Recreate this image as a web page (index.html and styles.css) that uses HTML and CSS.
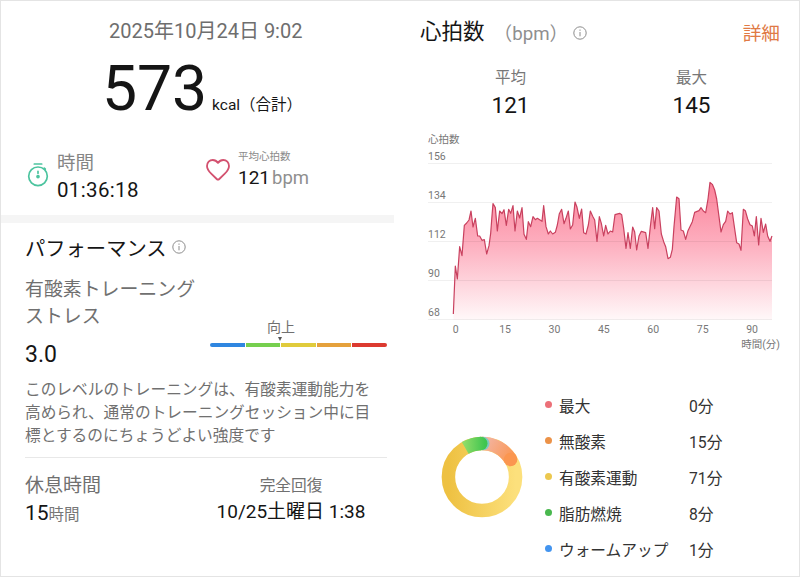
FILE: index.html
```html
<!DOCTYPE html>
<html lang="ja">
<head>
    <meta charset="UTF-8">
    <meta name="viewport" content="width=device-width, initial-scale=1.0">
    <title>ワークアウト</title>
    <link rel="stylesheet" href="styles.css">
</head>
<body>
    <div class="page">
        <div class="left">
            <div class="summary">
                <div class="date">2025年10月24日 9:02</div>
                <div class="calories"><span class="kcal">573</span><span class="unit">kcal（合計）</span></div>
                <div class="stats">
                    <div class="stat time">
                        <svg class="timer" width="22" height="26" viewBox="0 0 22 26" fill="none" stroke="#4cc49f" stroke-width="1.7" stroke-linecap="round">
                            <path d="M7.300 2h7.400"/>
                            <circle cx="11" cy="14.300" r="9.300"/>
                            <path d="M17.300 6.200l1 1M11 9.300v2"/>
                            <circle cx="11" cy="14.600" r="1" fill="#4cc49f"/>
                        </svg>
                        <div>
                            <div class="stat-name">時間</div>
                            <div class="stat-value">01:36:18</div>
                        </div>
                    </div>
                    <div class="stat pulse">
                        <svg class="heart" width="24" height="22" viewBox="0 0 24 22" fill="none" stroke="#d3516f" stroke-width="1.8" stroke-linejoin="round">
                            <path d="M12 3.900C10.400 1.700 8.600 1 6.800 1 3.500 1 1 3.600 1 7c0 3.100 1.700 5.200 4.200 7.700l5.500 5.300c.8.8 1.800.8 2.600 0l5.500-5.300C21.300 12.200 23 10.100 23 7c0-3.400-2.500-6-5.800-6-1.800 0-3.600.7-5.200 2.900z"/>
                        </svg>
                        <div>
                            <div class="pulse-name">平均心拍数</div>
                            <div class="pulse-value">121<span>bpm</span></div>
                        </div>
                    </div>
                </div>
            </div>
            <div class="performance">
                <h2>パフォーマンス
                    <svg class="info" width="14" height="14" viewBox="0 0 14 14" fill="none" stroke="#8c8c8c">
                        <circle cx="7" cy="7" r="6.200"/>
                        <path d="M7 6v4.300M7 3.500v1.300"/>
                    </svg>
                </h2>
                <div class="stress">
                    <div>
                        <div class="stress-name">有酸素トレーニング<br>ストレス</div>
                        <div class="stress-value">3.0</div>
                    </div>
                    <div class="level">
                        <div class="level-name">向上</div>
                        <div class="arrow"></div>
                        <div class="scale">
                            <i class="blue"></i><i class="green"></i><i class="yellow"></i><i class="orange"></i><i class="red"></i>
                        </div>
                    </div>
                </div>
                <p class="advice">このレベルのトレーニングは、有酸素運動能力を高められ、通常のトレーニングセッション中に目標とするのにちょうどよい強度です</p>
                <div class="rest">
                    <div>
                        <div class="rest-name">休息時間</div>
                        <div class="rest-value">15<span>時間</span></div>
                    </div>
                    <div class="recovery">
                        <div class="recovery-name">完全回復</div>
                        <div class="recovery-value">10/25土曜日 1:38</div>
                    </div>
                </div>
            </div>
        </div>

        <div class="right">
            <div class="heading">
                <h2>心拍数</h2>
                <span class="bpm">（bpm）</span>
                <svg class="info" width="14" height="14" viewBox="0 0 14 14" fill="none" stroke="#8c8c8c">
                    <circle cx="7" cy="7" r="6.200"/>
                    <path d="M7 6v4.300M7 3.500v1.300"/>
                </svg>
                <span class="detail">詳細</span>
            </div>
            <div class="numbers">
                <div><div class="number-name">平均</div><div class="number">121</div></div>
                <div><div class="number-name">最大</div><div class="number">145</div></div>
            </div>
            <div class="chart">
                <div class="axis-name">心拍数</div>
                <div class="plot">
                    <svg width="345" height="158" viewBox="0 0 1035 474">
                        <defs>
                            <linearGradient id="fade" gradientUnits="userSpaceOnUse" x1="0" y1="58" x2="0" y2="470">
                                <stop offset="0" stop-color="#fb8199"/>
                                <stop offset="0.45" stop-color="#fdafbf"/>
                                <stop offset="1" stop-color="#fff8f9"/>
                            </linearGradient>
                        </defs>
                        <path id="area" fill="url(#fade)"/>
                        <path d="M0 1.500h1032M0 118.500h1032M0 235.500h1032M0 352.500h1032M0 469.500h1032" stroke="#000" stroke-opacity=".06" stroke-width="3"/>
                        <path id="line" fill="none" stroke="#c9415f" stroke-width="3.600" stroke-linejoin="round"/>
                    </svg>
                    <div class="y-axis"><span>156</span><span>134</span><span>112</span><span>90</span><span>68</span></div>
                </div>
                <div class="x-axis"><span>0</span><span>15</span><span>30</span><span>45</span><span>60</span><span>75</span><span>90</span></div>
                <div class="x-name">時間(分)</div>
            </div>
            <div class="zones">
                <svg class="ring" width="82" height="82" viewBox="-41 -41 82 82" fill="none" stroke-width="13.500">
                    <defs>
                        <linearGradient id="gold" x1="0" y1="0" x2="1" y2="0">
                            <stop offset="0" stop-color="#eec142"/>
                            <stop offset="1" stop-color="#fce07c"/>
                        </linearGradient>
                        <linearGradient id="peach" gradientUnits="userSpaceOnUse" x1="3" y1="-34" x2="30" y2="-17">
                            <stop offset="0" stop-color="#f3b39f"/>
                            <stop offset="1" stop-color="#fb9650"/>
                        </linearGradient>
                        <linearGradient id="leaf" gradientUnits="userSpaceOnUse" x1="-18" y1="0" x2="3" y2="0">
                            <stop offset="0" stop-color="#8fdc68"/>
                            <stop offset="1" stop-color="#3fc550"/>
                        </linearGradient>
                    </defs>
                    <circle r="33.600" stroke="url(#gold)"/>
                    <path d="M0 -33.600A33.600 33.600 0 0 1 28.600 -17.600" stroke="url(#peach)"/>
                    <circle cx="28.600" cy="-17.600" r="6.750" fill="#fb9650" stroke="none"/>
                    <circle cx="0.800" cy="-33.600" r="6.750" fill="#7dc9c4" stroke="none"/>
                    <path d="M-16.800 -29.100A33.600 33.600 0 0 1 -1 -33.600" stroke="url(#leaf)"/>
                    <circle cx="-1.200" cy="-33.600" r="6.750" fill="url(#leaf)" stroke="none"/>
                </svg>
                <ul class="legend">
                    <li><i class="dot max"></i><span>最大</span><b>0分</b></li>
                    <li><i class="dot anaerobic"></i><span>無酸素</span><b>15分</b></li>
                    <li><i class="dot aerobic"></i><span>有酸素運動</span><b>71分</b></li>
                    <li><i class="dot fat"></i><span>脂肪燃焼</span><b>8分</b></li>
                    <li><i class="dot warmup"></i><span>ウォームアップ</span><b>1分</b></li>
                </ul>
            </div>
        </div>
    </div>
    <script src="chart.js"></script>
</body>
</html>
```
FILE: styles.css
```css
* { box-sizing: border-box; }
body { margin: 0; background: #fff; color: #151515; font-family: Roboto, "Noto Sans CJK JP", sans-serif; }
h2, p, ul { margin: 0; padding: 0; font-weight: normal; }
svg { display: block; flex: none; }
.page { display: flex; width: 800px; height: 577px; border: 1px solid #e4e4e4; overflow: hidden; white-space: nowrap; }

/* left side */
.left { width: 393px; flex: none; }
.summary { height: 222px; padding-top: 15px; border-bottom: 8px solid #f5f5f5; }
.date { padding-left: 108px; font-size: 20px; line-height: 30px; color: #6e6e6e; }
.calories { display: flex; align-items: baseline; height: 76px; padding-left: 101px; line-height: 85px; }
.kcal { font-size: 62.5px; letter-spacing: -0.1px; }
.unit { margin-left: 5px; font-size: 15.5px; }
.stats { display: flex; padding-top: 27px; }
.stat { display: flex; }
.time { width: 205px; padding-left: 26px; }
.timer { margin: 13px 8px 0 0; }
.stat-name { font-size: 18.5px; line-height: 28px; color: #858585; }
.stat-value { font-size: 20.5px; line-height: 26px; letter-spacing: 0.35px; }
.heart { margin: 10px 8px 0 0; }
.pulse-name { font-size: 10.5px; line-height: 16px; color: #8a8a8a; }
.pulse-value { font-size: 19px; line-height: 25px; }
.pulse-value span { margin-left: 2px; font-size: 18.5px; color: #8f8f8f; }

.performance { padding: 11px 7px 0 24px; }
.performance h2 { display: flex; font-size: 20.3px; line-height: 31px; }
.performance .info { margin: 6px 0 0 5px; }
.stress { display: flex; justify-content: space-between; padding-top: 11px; }
.stress-name { font-size: 18.9px; line-height: 27px; color: #707070; }
.stress-value { margin-top: 9px; font-size: 23px; line-height: 32px; }
.level { width: 177px; padding-top: 42px; }
.level-name { padding-left: 57px; font-size: 14px; line-height: 19px; color: #707070; }
.arrow { width: 0; margin-left: 68px; border: 2px solid transparent; border-top: 4px solid #555; border-bottom: 0; }
.scale { display: flex; gap: 1px; height: 4px; margin-top: 2px; border-radius: 2px; overflow: hidden; }
.scale i { flex: 1; }
.blue { background: #2f86e0; }
.green { background: #76cf4e; }
.yellow { background: #e0cb3c; }
.orange { background: #e5a13c; }
.red { background: #dc3a30; }
.advice { width: 350px; margin-top: 7px; font-size: 15.7px; line-height: 23px; color: #707070; white-space: normal; }
.rest { display: flex; margin-top: 10px; padding-top: 13px; border-top: 1px solid #e8e8e8; }
.rest-name { font-size: 19px; line-height: 30px; color: #707070; }
.rest-value { font-size: 21px; line-height: 25px; }
.rest-value span { font-size: 15.5px; color: #777; }
.recovery { width: 150px; margin-left: 115px; text-align: center; }
.recovery-name { font-size: 15.7px; line-height: 30px; color: #707070; }
.recovery-value { font-size: 19px; line-height: 22px; }

/* right side */
.right { flex: 1; min-width: 0; padding: 13px 19px 0 26px; }
.heading { display: flex; align-items: center; height: 34px; }
.heading h2 { margin-top: -3px; font-size: 21.5px; }
.bpm { margin: 1px 0 0 9px; font-size: 18.7px; color: #8f8f8f; }
.heading .info { margin: 4px 0 0 5px; }
.detail { margin-left: auto; font-size: 18.7px; color: #e07a45; }
.numbers { display: flex; padding-top: 18px; text-align: center; }
.numbers > div { width: 181px; flex: none; }
.number-name { font-size: 15.5px; line-height: 24px; color: #777; }
.number { font-size: 22.5px; line-height: 30px; }
.chart { padding: 12px 0 0 8px; font-size: 10.5px; color: #777; }
.axis-name { line-height: 16px; }
.plot { position: relative; margin-top: 15px; }
.y-axis { position: absolute; top: -13px; left: 0; display: grid; grid-auto-rows: 39.1px; line-height: 14px; }
.x-axis { display: flex; width: 347px; margin: 1px 0 0 3px; line-height: 16px; }
.x-axis span { width: 49.4px; flex: none; text-align: center; }
.x-name { width: 352px; line-height: 13px; text-align: right; }
.zones { display: flex; padding: 36px 0 0 21px; }
.ring { margin-top: 49px; }
.legend { margin-left: 22px; list-style: none; }
.legend li { display: flex; align-items: center; height: 36px; font-size: 15.7px; color: #333; }
.legend span { width: 130px; }
.legend b { font-weight: normal; }
.dot { width: 7px; height: 7px; margin: -1px 7px 0 0; border-radius: 50%; }
.max { background: #ec7078; }
.anaerobic { background: #ec9248; }
.aerobic { background: #ecc84f; }
.fat { background: #49b84e; }
.warmup { background: #4394ef; }
```
FILE: chart.js
```js
// x, y pairs of the heart rate curve in viewBox units
const points = [
    [76,453],[82,309],[88,348],[95,251],[102,278],[109,187],[116,180],[123,171],[129,144],[135,192],
    [142,166],[149,219],[155,219],[162,232],[169,230],[176,273],[183,248],[188,211],[191,171],[195,122],
    [202,134],[208,204],[215,144],[222,152],[228,140],[235,187],[242,139],[248,151],[255,128],[261,204],
    [268,144],[275,165],[282,134],[288,214],[295,229],[301,176],[308,191],[315,161],[322,170],[328,166],
    [342,175],[347,128],[354,191],[361,213],[367,204],[374,213],[382,208],[388,186],[394,152],[401,139],
    [408,182],[414,166],[421,144],[427,198],[434,186],[441,117],[447,133],[454,166],[461,138],[467,209],
    [474,213],[481,186],[487,144],[494,160],[500,171],[507,235],[514,161],[520,181],[527,219],[533,187],
    [540,213],[547,204],[554,207],[561,155],[575,151],[581,155],[587,196],[594,256],[600,209],[607,256],
    [614,192],[620,207],[626,261],[633,219],[640,205],[653,209],[660,256],[667,191],[674,134],[680,197],
    [686,134],[693,144],[700,213],[707,236],[713,251],[720,287],[727,283],[733,259],[738,191],[746,102],
    [753,107],[759,201],[766,204],[773,229],[780,203],[793,176],[800,148],[813,143],[819,134],[826,144],
    [833,149],[840,108],[846,58],[853,64],[860,81],[866,108],[873,161],[879,207],[886,185],[893,175],
    [899,144],[906,153],[913,149],[919,191],[926,239],[933,243],[939,262],[946,139],[952,143],[959,168],
    [966,185],[973,189],[979,219],[985,161],[992,246],[999,166],[1006,208],[1013,183],[1019,219],[1026,235],
    [1032,219]
];
const d = 'M' + points.map(p => p.join(' ')).join('L');
document.getElementById('line').setAttribute('d', d);
document.getElementById('area').setAttribute('d', d + 'V470H76Z');
```
